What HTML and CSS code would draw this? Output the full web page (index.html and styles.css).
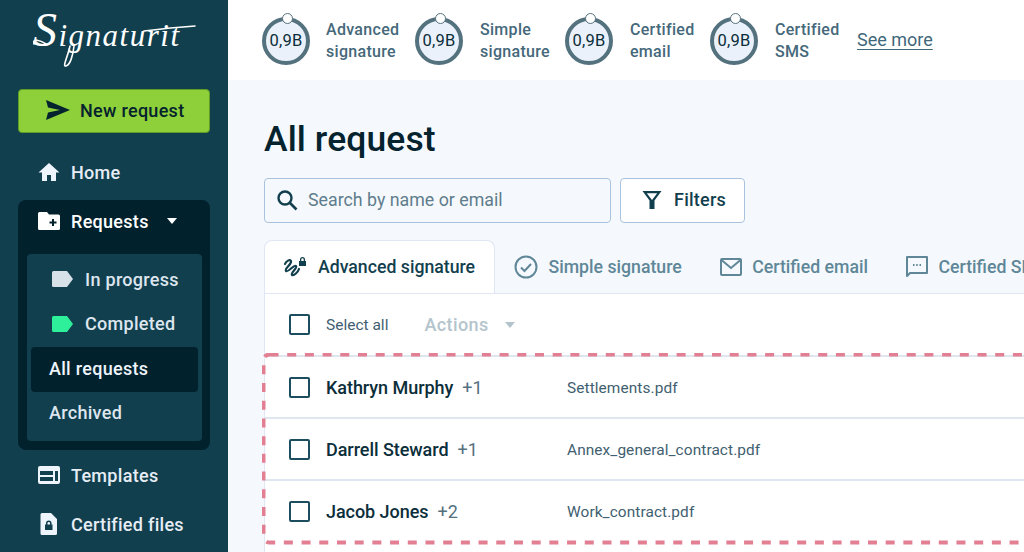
FILE: index.html
```html
<!DOCTYPE html>
<html lang="en">
<head>
<meta charset="utf-8">
<title>Signaturit</title>
<link rel="stylesheet" href="styles.css">
</head>
<body>
<div class="app">
  <aside class="sidebar">
    <div class="logo">
      <svg width="228" height="89" viewBox="0 0 228 89">
        <text x="33" y="46" class="logo-text"><tspan class="logo-cap">S</tspan>ignaturit</text>
        <path class="logo-swash" d="M144 31C160 29 180 27 195 26M34 44C32 38 40 40 46 44M70 46C68 56 62 67 66 66C70 65 73 56 74 46"/>
      </svg>
    </div>
    <button class="new-request">
      <svg width="24" height="20" viewBox="0 0 24 20"><path d="M0 0L24 10L0 20L2 12.5L14 10L2 7.5Z" fill="#04232e"/></svg>
      <span>New request</span>
    </button>
    <nav class="nav">
      <a class="nav-item">
        <svg width="22" height="20" viewBox="0 0 22 20"><path d="M11 1L0.5 10.5H4V19H9V13H13V19H18V10.5H21.5Z" fill="#eef4fc"/></svg>
        <span>Home</span>
      </a>
      <div class="requests">
        <a class="nav-item nav-open">
          <svg width="22" height="18" viewBox="0 0 22 18"><path d="M1.500 0H9L11 2.500H20.500Q22 2.500 22 4V16.500Q22 18 20.500 18H1.500Q0 18 0 16.500V1.500Q0 0 1.500 0Z" fill="#fff"/><path d="M15 7V14M11.500 10.500H18.500" stroke="#01222d" stroke-width="2"/></svg>
          <span>Requests</span>
          <i class="caret caret-light"></i>
        </a>
        <div class="subnav">
          <a class="sub-item sub-tag">
            <svg width="21" height="16" viewBox="0 0 21 16"><path d="M1.500 0H15L21 8L15 16H1.500Q0 16 0 14.500V1.500Q0 0 1.500 0Z" fill="#d8e0e8"/></svg>
            <span>In progress</span>
          </a>
          <a class="sub-item sub-tag">
            <svg width="21" height="16" viewBox="0 0 21 16"><path d="M1.500 0H15L21 8L15 16H1.500Q0 16 0 14.500V1.500Q0 0 1.500 0Z" fill="#2ff09a"/></svg>
            <span>Completed</span>
          </a>
          <a class="sub-item sub-active">All requests</a>
          <a class="sub-item">Archived</a>
        </div>
      </div>
      <a class="nav-item nav-templates">
        <svg width="22" height="18" viewBox="0 0 22 18"><path fill-rule="evenodd" d="M2 0H20Q22 0 22 2V16Q22 18 20 18H2Q0 18 0 16V2Q0 0 2 0ZM2 5V9H15V5ZM2 11V15H15V11ZM17 5V15H20V5Z" fill="#eef4fc"/></svg>
        <span>Templates</span>
      </a>
      <a class="nav-item nav-files">
        <svg width="22" height="22" viewBox="0 0 22 22"><path fill-rule="evenodd" d="M4 0H13L19 6V20.500Q19 22 17.500 22H4Q2.500 22 2.500 20.500V1.500Q2.500 0 4 0ZM8 11.500V10Q8 7.500 10.750 7.500Q13.500 7.500 13.500 10V11.500H14.500V17H7V11.500ZM9.500 11.500H12V10Q12 9 10.750 9Q9.500 9 9.500 10Z" fill="#eef4fc"/></svg>
        <span>Certified files</span>
      </a>
    </nav>
  </aside>

  <div class="content">
    <header class="topbar">
      <div class="stat stat-a"><div class="ring">0,9B</div><p>Advanced<br>signature</p></div>
      <div class="stat stat-b"><div class="ring">0,9B</div><p>Simple<br>signature</p></div>
      <div class="stat stat-c"><div class="ring">0,9B</div><p>Certified<br>email</p></div>
      <div class="stat stat-d"><div class="ring">0,9B</div><p>Certified<br>SMS</p></div>
      <a class="see-more">See more</a>
    </header>

    <main class="main">
      <h1>All request</h1>
      <div class="search-row">
        <div class="search">
          <svg width="22" height="22" viewBox="0 0 22 22"><circle cx="9" cy="9" r="6.500" fill="none" stroke="#123f4e" stroke-width="2.400"/><path d="M14 14L20.500 20.500" stroke="#123f4e" stroke-width="2.600"/></svg>
          <span>Search by name or email</span>
        </div>
        <button class="filters">
          <svg width="20" height="20" viewBox="0 0 20 20"><path fill-rule="evenodd" d="M0.500 1H19.500L12.500 10.500V19H7.500V10.500ZM4.800 3.200L10 10L15.200 3.200Z" fill="#123f4e"/></svg>
          <span>Filters</span>
        </button>
      </div>

      <div class="tabs">
        <div class="tab tab-active">
          <svg width="24" height="22" viewBox="0 0 24 22"><path d="M2 8C3 5 7 3 8 5C9 8 1 13 3 15C5 17 11 8 13 10C15 12 7 17 9 19C11 20 15 16 16 13" fill="none" stroke="#123f4e" stroke-width="2.200" stroke-linecap="round"/><path fill-rule="evenodd" d="M17 5V3.500Q17 1 19.500 1Q22 1 22 3.500V5H23V10H16V5ZM18.300 5H20.700V3.500Q20.700 2.300 19.500 2.300Q18.300 2.300 18.300 3.500Z" fill="#123f4e"/></svg>
          <span>Advanced signature</span>
        </div>
        <div class="tab tab-simple">
          <svg width="24" height="24" viewBox="0 0 24 24"><circle cx="12" cy="12" r="10.500" fill="none" stroke="#5f8798" stroke-width="2"/><path d="M7 12.500L10.500 16L17 9" fill="none" stroke="#5f8798" stroke-width="2"/></svg>
          <span>Simple signature</span>
        </div>
        <div class="tab tab-email">
          <svg width="22" height="18" viewBox="0 0 22 18"><rect x="1" y="1" width="20" height="16" rx="1" fill="none" stroke="#5f8798" stroke-width="2"/><path d="M1.500 2L11 10L20.500 2" fill="none" stroke="#5f8798" stroke-width="2"/></svg>
          <span>Certified email</span>
        </div>
        <div class="tab tab-sms">
          <svg width="22" height="22" viewBox="0 0 22 22"><path d="M1 1H21V17H4L1 20Z" fill="none" stroke="#5f8798" stroke-width="2" stroke-linejoin="round"/><path d="M7 9H8.500M10.250 9H11.750M13.500 9H15" stroke="#5f8798" stroke-width="2"/></svg>
          <span>Certified SMS</span>
        </div>
      </div>

      <section class="table">
        <div class="toolbar">
          <i class="check"></i>
          <span class="select-all">Select all</span>
          <span class="actions">Actions</span>
          <i class="caret caret-muted"></i>
        </div>
        <div class="rows">
          <div class="row">
            <i class="check"></i>
            <div class="who"><b>Kathryn Murphy</b><span>+1</span></div>
            <div class="file">Settlements.pdf</div>
          </div>
          <div class="row">
            <i class="check"></i>
            <div class="who"><b>Darrell Steward</b><span>+1</span></div>
            <div class="file">Annex_general_contract.pdf</div>
          </div>
          <div class="row">
            <i class="check"></i>
            <div class="who"><b>Jacob Jones</b><span>+2</span></div>
            <div class="file">Work_contract.pdf</div>
          </div>
          <svg class="dash" width="800" height="192" viewBox="0 0 800 192"><rect x="1.500" y="1.500" width="900" height="188" rx="6" fill="none" stroke="#e27f92" stroke-width="4" stroke-dasharray="9 8.700"/></svg>
        </div>
      </section>
    </main>
  </div>
</div>
</body>
</html>
```

FILE: styles.css
```css
* { box-sizing: border-box; }
html, body { margin: 0; height: 100%; overflow: hidden; }
body { font-family: Roboto, "Liberation Sans", sans-serif; background: #f5f9fd; color: #04232e; }
svg { display: block; flex: none; }
i { display: block; flex: none; }
p, h1 { margin: 0; }

.app { display: flex; width: 1024px; height: 552px; overflow: hidden; }

/* Sidebar */
.sidebar { width: 228px; flex: none; background: #123f4e; }
.logo { height: 89px; }
.logo-text { font-family: "Liberation Serif", serif; font-style: italic; font-size: 31px; fill: #fff; letter-spacing: 1.500px; }
.logo-cap { font-size: 48px; }
.logo-swash { fill: none; stroke: #fff; stroke-width: 1.600; stroke-linecap: round; }
.new-request { display: flex; align-items: center; gap: 10px; width: 192px; height: 44px; margin-left: 18px; padding: 0 0 2px 27px; background: #8ed03a; border: 1px solid #5f9c25; border-radius: 4px; font: 500 18px Roboto, sans-serif; letter-spacing: .3px; color: #04232e; }
.nav { margin-top: 17px; }
.nav-item { display: flex; align-items: center; gap: 11px; height: 46px; padding: 0 0 2px 38px; font-size: 18px; font-weight: 500; letter-spacing: .3px; color: #e6edf5; }
.nav-item.nav-open { height: 44px; padding-left: 20px; color: #fff; }
.requests { width: 192px; height: 250px; margin: 4px 0 0 18px; padding-bottom: 9px; background: #01222d; border-radius: 8px; }
.caret { width: 0; height: 0; border-left: 5.500px solid transparent; border-right: 5.500px solid transparent; }
.caret-light { margin-left: 7px; border-top: 6px solid #fff; }
.caret-muted { margin-left: 16px; border-top: 6px solid #b4c4cc; }
.subnav { width: 175px; height: 187px; margin: 10px 0 0 9px; padding: 4px 4px 0; background: #123f4e; border-radius: 4px; }
.sub-item { display: flex; align-items: center; gap: 12px; height: 44.500px; padding: 0 0 2px 18px; font-size: 18px; font-weight: 500; letter-spacing: .3px; color: #dde6ef; }
.sub-tag { padding-left: 21px; }
.sub-active { background: #01222d; border-radius: 4px; color: #eef4fc; }
.nav-templates { margin-top: 3px; height: 46px; }
.nav-files { margin-top: 1px; height: 50px; }

/* Top bar */
.content { flex: 1; min-width: 0; display: flex; flex-direction: column; }
.topbar { display: flex; align-items: center; height: 80px; flex: none; padding: 1px 0 0 34px; background: #fff; }
.ring { position: relative; display: flex; align-items: center; justify-content: center; flex: none; width: 48px; height: 48px; border: 4.500px solid #54717e; border-radius: 50%; background: #eaf1fb; font-size: 16.500px; font-weight: 400; letter-spacing: .2px; color: #0b2e3a; }
.ring::before { content: ""; position: absolute; top: -8px; left: 50%; width: 9px; height: 9px; margin-left: -4.500px; border: 1.500px solid #54717e; border-radius: 50%; background: #fff; }
.stat { display: flex; align-items: center; flex: none; }
.stat p { font-size: 16px; font-weight: 500; line-height: 22px; letter-spacing: .3px; color: #45687a; }
.stat-a { width: 153px; gap: 16px; }
.stat-b { width: 150px; gap: 17px; }
.stat-c { width: 145px; gap: 17px; }
.stat-d { width: 147px; gap: 17px; }
.see-more { margin-bottom: 2px; font-size: 18px; color: #41687a; text-decoration: underline; text-underline-offset: 3px; text-decoration-thickness: 1px; }

/* Main */
.main { flex: 1; min-height: 0; padding: 35px 0 0 36px; }
h1 { font-size: 35.500px; font-weight: 500; line-height: 48px; letter-spacing: .1px; color: #04232e; }
.search-row { display: flex; gap: 9px; margin-top: 15px; }
.search { display: flex; align-items: center; gap: 10px; width: 347px; height: 45px; padding: 0 0 2px 11px; border: 1.500px solid #a9c3de; border-radius: 4px; font-size: 17.800px; color: #5f7d8c; }
.filters { display: flex; align-items: center; gap: 12px; width: 125px; height: 45px; padding: 0 0 2px 21px; background: #fff; border: 1.500px solid #a9c3de; border-radius: 4px; font: 500 18px Roboto, sans-serif; letter-spacing: .25px; color: #123f4e; }

.tabs { display: flex; align-items: center; height: 53px; margin-top: 17px; white-space: nowrap; }
.tab { display: flex; align-items: center; flex: none; gap: 10.500px; font-size: 17.700px; font-weight: 500; color: #5f8798; }
.tab-active { width: 231px; height: 53px; padding-left: 18px; gap: 11px; background: #fff; border: 1.500px solid #e0e7f2; border-bottom: 0; border-radius: 8px 8px 0 0; color: #123f4e; position: relative; z-index: 1; }
.tab-simple { margin-left: 19px; }
.tab-email { margin-left: 38px; }
.tab-sms { margin-left: 38px; }

.table { background: #fff; border-left: 1.500px solid #e0e7f2; border-top: 1.500px solid #e0e7f2; height: 300px; }
.check { width: 21px; height: 21px; border: 2px solid #1c4e60; border-radius: 2px; }
.toolbar { display: flex; align-items: center; height: 61px; padding-left: 24px; }
.select-all { margin-left: 16px; font-size: 15.500px; color: #3f6070; }
.actions { margin-left: 36px; font-size: 18px; font-weight: 500; letter-spacing: .4px; color: #b4c4cc; }
.rows { position: relative; }
.row { display: flex; align-items: center; height: 62px; padding-left: 24px; border-top: 2px solid #dfe6f0; }
.who { display: flex; gap: 9px; width: 241px; margin-left: 16px; font-size: 18px; }
.who b { font-weight: 500; letter-spacing: -.05px; color: #0b2e3a; }
.who span { color: #54707e; }
.file { padding-top: 2px; font-size: 15.400px; letter-spacing: .1px; color: #3f6070; }
.dash { position: absolute; top: -2px; left: -3px; }
```
